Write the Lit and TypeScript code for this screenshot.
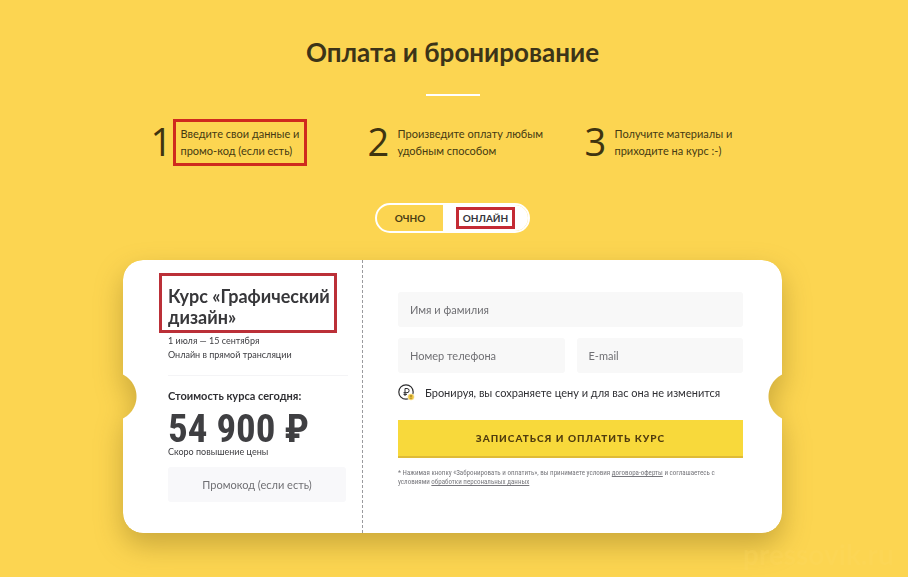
import { LitElement, html, css } from "lit";
import { customElement, state } from "lit/decorators.js";

const STEPS = [
  { lines: ["Введите свои данные и", "промо-код (если есть)"], marked: true },
  { lines: ["Произведите оплату любым", "удобным способом"], marked: false },
  { lines: ["Получите материалы и", "приходите на курс :-)"], marked: false },
];

const MODES = ["Очно", "Онлайн"];

@customElement("app-root")
export class AppRoot extends LitElement {
  @state() private mode = 1;

  static styles = css`
    :host {
      display: block;
      min-height: 100vh;
      box-sizing: border-box;
      overflow: hidden;
      position: relative;
      padding: 36px 19px 43px 16px;
      background: #fcd551;
      color: #35322c;
      font-family: Lato, "Noto Sans", sans-serif;
      font-size: 11px;
    }
    * { box-sizing: border-box; }
    h1, h2, p { margin: 0; }
    h1 {
      text-align: center;
      font-size: 26px;
      line-height: 32px;
      font-weight: 700;
      color: #3c3418;
    }
    .rule {
      width: 54px;
      height: 2px;
      margin: 26px auto 29px;
      background: #fff;
    }
    .steps {
      max-width: 604px;
      margin: 0 auto;
      padding: 0;
      list-style: none;
      display: grid;
      grid-template-columns: repeat(3, minmax(0, 1fr));
      gap: 47px;
      color: #453a12;
    }
    .step { display: flex; align-items: flex-start; }
    .num {
      flex: none;
      width: 30px;
      font: 400 38px/32px "Open Sans", sans-serif;
      color: #3f3410;
    }
    .text { line-height: 17px; white-space: nowrap; }
    .marked { position: relative; }
    .marked::after {
      content: "";
      position: absolute;
      border: 3px solid #cf2a1e;
      inset: -6px -8px -7px;
      pointer-events: none;
    }
    .toggle {
      width: 155px;
      height: 30px;
      margin: 44px auto 27px;
      display: flex;
      border: 2px solid #fff;
      border-radius: 15px;
      overflow: hidden;
    }
    .mode {
      flex: 66 1 0;
      display: flex;
      align-items: center;
      justify-content: center;
      padding: 0;
      border: 0;
      background: none;
      color: #4a3e14;
      font: 700 10px/14px Lato, sans-serif;
      text-transform: uppercase;
      cursor: pointer;
    }
    .mode:last-child { flex-grow: 85; }
    .mode.on { background: #fff; color: #35353b; }
    .mode .marked::after { inset: -4px -7px; border-color: #c42a34; }
    .shadow {
      max-width: 659px;
      margin: 0 auto;
      filter: drop-shadow(0 12px 14px rgba(120, 95, 20, 0.38));
    }
    .ticket {
      display: grid;
      grid-template-columns: 239px 1fr;
      background: #fff;
      border-radius: 20px;
      mask-image: radial-gradient(circle at -11px 50%, transparent 24px, #000 25px),
        radial-gradient(circle at calc(100% + 11px) 50%, transparent 24px, #000 25px);
      mask-composite: intersect;
    }
    .course { padding: 26px 14px 31px 45px; }
    h2 {
      font-size: 18px;
      line-height: 21px;
      font-weight: 700;
      color: #37373a;
      width: 161px;
      white-space: nowrap;
    }
    h2.marked::after { inset: -13px -8px -5px -9px; border-color: #bb3038; }
    .small { font-size: 9px; line-height: 14px; color: #3c3c40; }
    .dates { margin-top: 6px; padding-bottom: 13px; border-bottom: 1px solid #f4f4f6; }
    .label { margin-top: 13px; line-height: 14px; font-weight: 700; color: #2f2f33; }
    .price {
      margin-top: 10px;
      font: 700 39px/32px "Roboto Condensed", Roboto, sans-serif;
      color: #3f3f42;
    }
    input {
      width: 100%;
      height: 35px;
      padding: 0 12px;
      border: 0;
      border-radius: 3px;
      background: #f8f8f8;
      font: 400 11px/14px Lato, sans-serif;
      color: #333;
    }
    input::placeholder { color: #707074; opacity: 1; }
    .promo { display: block; width: 178px; margin-top: 8px; text-align: center; background: #f8f8fa; }
    form {
      padding: 32px 39px 32px 35px;
      border-left: 1px dashed #9a9a9e;
      display: flex;
      flex-direction: column;
    }
    .fields { display: grid; grid-template-columns: 1fr 1fr; gap: 11px 12px; }
    .wide { grid-column: 1 / -1; }
    .note { display: flex; align-items: center; gap: 10px; margin: 11px 0 19px; line-height: 16px; color: #2f2f33; }
    .note svg { width: 17px; height: 17px; flex: none; }
    .pay {
      height: 38px;
      border: 0;
      border-bottom: 2px solid #dfbb37;
      background: #f8d93b;
      color: #503c0e;
      font: 900 10px/14px Lato, sans-serif;
      letter-spacing: 1px;
      text-transform: uppercase;
      cursor: pointer;
    }
    .legal { margin-top: 11px; font: 400 7px/9px "Roboto Condensed", Roboto, sans-serif; color: #77777c; }
    .legal a { color: inherit; }
    .watermark {
      position: absolute;
      right: 14px;
      bottom: 6px;
      font-size: 28px;
      line-height: 34px;
      font-weight: 700;
      color: rgba(255, 218, 100, 0.22);
    }
  `;

  render() {
    return html`
      <h1>Оплата и бронирование</h1>
      <div class="rule"></div>
      <ol class="steps">
        ${STEPS.map(
          (s, i) => html`<li class="step">
            <span class="num">${i + 1}</span>
            <span class="text ${s.marked ? "marked" : ""}">${s.lines[0]}<br />${s.lines[1]}</span>
          </li>`
        )}
      </ol>
      <div class="toggle">
        ${MODES.map(
          (m, i) => html`<button
            type="button"
            class="mode ${i === this.mode ? "on" : ""}"
            aria-pressed=${i === this.mode}
            @click=${() => (this.mode = i)}
          ><span class=${i === 1 ? "marked" : ""}>${m}</span></button>`
        )}
      </div>
      <div class="shadow">
        <div class="ticket">
          <section class="course">
            <h2 class="marked">Курс «Графический<br />дизайн»</h2>
            <p class="small dates">1 июля — 15 сентября<br />Онлайн в прямой трансляции</p>
            <p class="label">Стоимость курса сегодня:</p>
            <p class="price">54 900 ₽</p>
            <p class="small">Скоро повышение цены</p>
            <input class="promo" aria-label="Промокод" placeholder="Промокод (если есть)" />
          </section>
          <form @submit=${(e: Event) => e.preventDefault()}>
            <div class="fields">
              <input class="wide" aria-label="Имя и фамилия" placeholder="Имя и фамилия" />
              <input type="tel" aria-label="Номер телефона" placeholder="Номер телефона" />
              <input type="email" aria-label="E-mail" placeholder="E-mail" />
            </div>
            <p class="note">
              <svg viewBox="0 0 17 17" fill="none" aria-hidden="true">
                <circle cx="8" cy="8" r="7.2" stroke="#2e2e30" stroke-width="1.2" />
                <path d="M7 12V4.5h2a2 2 0 0 1 0 4.2H5.5M5.5 10.4H9" stroke="#2e2e30" />
                <circle cx="13" cy="13" r="3.3" fill="#efc640" stroke="#fff" stroke-width=".6" />
                <path d="M13 11v2.4M13 14.2v.8" stroke="#7a6018" stroke-width=".9" />
              </svg>
              <span>Бронируя, вы сохраняете цену и для вас она не изменится</span>
            </p>
            <button class="pay" type="submit">Записаться и оплатить курс</button>
            <p class="legal">
              * Нажимая кнопку «Забронировать и оплатить», вы принимаете условия
              <a href="#offer">договора-оферты</a> и соглашаетесь с<br />условиями
              <a href="#privacy">обработки персональных данных</a>
            </p>
          </form>
        </div>
      </div>
      <div class="watermark">pressovik.ru</div>
    `;
  }
}
